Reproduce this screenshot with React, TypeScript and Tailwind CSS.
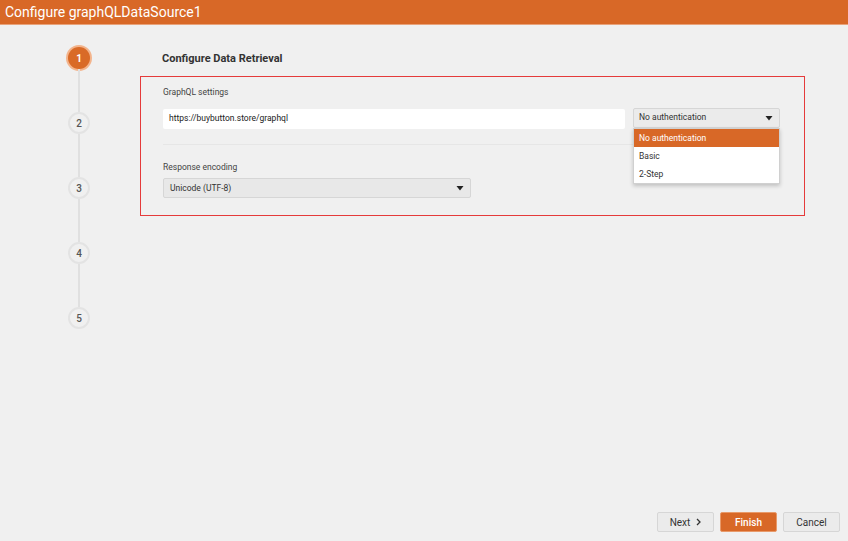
import React from "react";

const Step = ({ n, active }: { n: number; active?: boolean }) =>
  active ? (
    <div className="w-[22px] h-[22px] rounded-full bg-[#d96a27] ring-2 ring-[#f3b48c] flex items-center justify-center text-white text-[10px] font-bold">
      {n}
    </div>
  ) : (
    <div className="w-[22px] h-[22px] rounded-full bg-[#f0f0f0] border-2 border-[#e3e3e3] flex items-center justify-center text-[#555] text-[10px] font-medium">
      {n}
    </div>
  );

const Caret = () => (
  <svg width="8" height="6" viewBox="0 0 8 6" className="shrink-0">
    <path d="M0.5 1 L7.5 1 L4 5.5 Z" fill="#222" />
  </svg>
);

export default function App() {
  return (
    <div
      className="w-[848px] h-[541px] bg-[#f0f0f0] flex flex-col overflow-hidden"
      style={{ fontFamily: "Roboto, 'Liberation Sans', sans-serif" }}
    >
      <div className="h-[25px] bg-[#d86827] border-b border-[#e8a27a] flex items-center pl-[5px] shrink-0">
        <span className="text-white text-[14px] leading-none">Configure graphQLDataSource1</span>
      </div>
      <div className="flex-1 flex min-h-0">
        <div className="w-[158px] shrink-0 flex flex-col items-center pt-[22px] pr-[0px]">
          <div className="flex flex-col items-center">
            <Step n={1} active />
            <div className="w-[2px] h-[43px] bg-[#e0e0e0]" />
            <Step n={2} />
            <div className="w-[2px] h-[43px] bg-[#e0e0e0]" />
            <Step n={3} />
            <div className="w-[2px] h-[43px] bg-[#e0e0e0]" />
            <Step n={4} />
            <div className="w-[2px] h-[43px] bg-[#e0e0e0]" />
            <Step n={5} />
          </div>
        </div>
        <div className="flex-1 flex flex-col min-w-0 -ml-[18px]">
          <div className="flex-1">
            <div className="pt-[28px] pl-[22px] text-[11px] font-bold text-[#333] leading-none">
              Configure Data Retrieval
            </div>
            <div className="mt-[12px] w-[665px] h-[140px] border border-[#e53b3b] pl-[22px] pr-[24px] pt-[11px] relative">
              <div className="text-[8.5px] text-[#444] leading-none">GraphQL settings</div>
              <div className="mt-[12px] flex items-start gap-[8px]">
                <div className="flex-1 h-[20px] bg-white rounded-[2px] flex items-center pl-[6px] text-[8.5px] text-[#222]">
                  https://buybutton.store/graphql
                </div>
                <div className="w-[147px] h-[20px] -mt-[1px] bg-[#ebebeb] border border-[#d6d6d6] rounded-[2px] flex items-center justify-between pl-[5px] pr-[6px] text-[8.5px] text-[#333]">
                  <span>No authentication</span>
                  <Caret />
                </div>
              </div>
              <div className="mt-[15px] h-px bg-[#e6e6e6]" />
              <div className="mt-[18px] text-[8.5px] text-[#444] leading-none">Response encoding</div>
              <div className="mt-[7px] w-[308px] h-[20px] bg-[#e8e8e8] border border-[#d6d6d6] rounded-[2px] flex items-center justify-between pl-[6px] pr-[6px] text-[8.5px] text-[#333]">
                <span>Unicode (UTF-8)</span>
                <Caret />
              </div>
              <div className="absolute left-[492px] top-[51px] w-[147px] bg-white border border-[#d0d0d0] shadow-[0_2px_4px_rgba(0,0,0,0.2)] text-[8.5px] text-[#333]">
                <div className="h-[18px] bg-[#d86827] text-white flex items-center pl-[5px]">No authentication</div>
                <div className="h-[18px] flex items-center pl-[5px] mt-[0px]">Basic</div>
                <div className="h-[18px] flex items-center pl-[5px]">2-Step</div>
              </div>
            </div>
          </div>
          <div className="flex justify-end gap-[6px] pr-[8px] pb-[9px]">
            <div className="w-[57px] h-[20px] bg-[#ebebeb] border border-[#d6d6d6] rounded-[2px] flex items-center justify-center gap-[6px] text-[10px] text-[#333]">
              <span>Next</span>
              <svg width="5" height="8" viewBox="0 0 5 8">
                <path d="M1 1 L4 4 L1 7" stroke="#333" strokeWidth="1.3" fill="none" />
              </svg>
            </div>
            <div className="w-[57px] h-[20px] bg-[#d86827] border border-[#e89a6a] rounded-[2px] flex items-center justify-center text-[10px] text-white font-medium">
              Finish
            </div>
            <div className="w-[57px] h-[20px] bg-[#ebebeb] border border-[#d6d6d6] rounded-[2px] flex items-center justify-center text-[10px] text-[#333]">
              Cancel
            </div>
          </div>
        </div>
      </div>
    </div>
  );
}
